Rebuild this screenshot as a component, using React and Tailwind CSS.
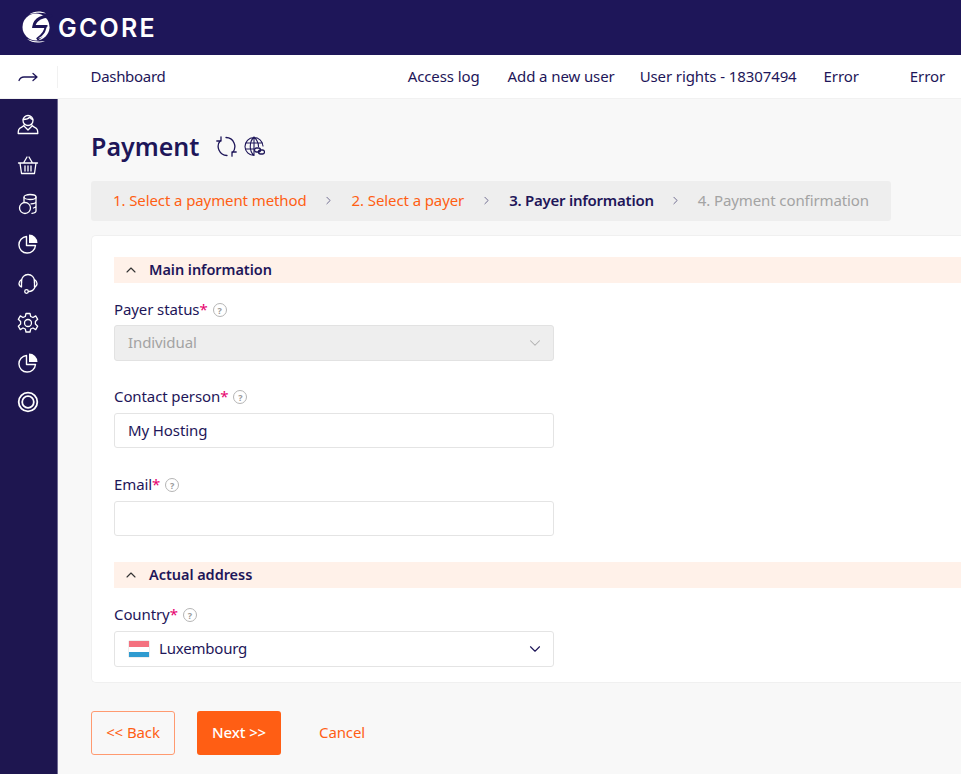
import React from "react";
import { ChevronUp, ChevronDown, ChevronRight } from "lucide-react";

const Logo = () => (
  <svg width="32" height="34" viewBox="0 0 32 34" className="mb-[1px] shrink-0">
    <circle cx="15" cy="17" r="13.500" fill="#fff" />
    <path d="M31 6.500C22 5 14 9 12.800 16.500H25C25 22 21 26 16 29.500" fill="none" stroke="#1e1659" strokeWidth="3" />
    <path d="M25 19C24 24 20 27 17 28.500 22 28 27 24 28.500 17.500L26 16.500z" fill="#fff" />
    <path d="M8 4.500C13 1 20 .5 25 3.500 20 2.500 14 2.500 8 4.500zM6 29c5 4 12 4.500 18 2-6 1-12 .5-18-2z" fill="#fff" />
  </svg>
);

const Ic = ({ children }) => (
  <svg width="22" height="22" viewBox="0 0 22 22" fill="none" stroke="#fff" strokeWidth="1.300" strokeLinecap="round" strokeLinejoin="round">{children}</svg>
);

const Pie = () => (
  <Ic>
    <path d="M9.500 3.500a8.300 8.300 0 1 0 9 9h-9z" strokeWidth="1.400" />
    <path d="M12 1.500a8.500 8.500 0 0 1 8.500 8.500H12z" fill="#fff" stroke="none" />
  </Ic>
);

const icons = [
  <Ic key="u"><circle cx="11" cy="6.500" r="5" /><path d="M6.300 5.500c2.500 0 5-.5 6.700-2.500 .5 1.500 1.500 2.200 2.700 2.500M7.500 10.500c-.5 2.500-4.500 2.500-5.700 5-.4 1-.6 2.500-.6 4h19.600c0-1.500-.2-3-.6-4-1.200-2.500-5.200-2.500-5.700-5M7.500 12.500 11 16l3.500-3.500" /></Ic>,
  <Ic key="b"><path d="M1.500 9h19M3 9l1.500 10.500h13L19 9M6.500 9 10 3M15.500 9 12 3M8 12v5M11 12v5M14 12v5" /></Ic>,
  <Ic key="d"><ellipse cx="13" cy="4" rx="6" ry="2.500" /><path d="M7 4.500v4.500M19 4V18c0 1-1.500 2-4 2.300M19 8.500c0 1-2 2.200-5 2.400M19 13c0 .8-1 1.500-2.500 2" /><circle cx="8" cy="15" r="5.500" /></Ic>,
  <Pie key="p1" />,
  <Ic key="h"><path d="M4.500 11V9a6.500 6.500 0 0 1 13 0v2" /><path d="M4.500 7.500C3 8.500 2 10 2 11.500s1 3 2.500 3.500zM17.500 7.500c1.500 1 2.500 2.500 2.500 4s-1 3-2.500 3.500z" /><path d="M18 15c-1 3-3.500 4.500-6.500 4.500" /><circle cx="9.500" cy="19.500" r="1.800" /></Ic>,
  <Ic key="g"><circle cx="11" cy="11" r="3.500" /><path d="M9 1.500h4l.7 3 2.300 1 2.700-1.600 2 3.400-2.300 2.200v2.500l2.300 2.200-2 3.400-2.700-1.600-2.300 1-.7 3H9l-.7-3-2.300-1-2.700 1.600-2-3.400 2.300-2.200V9.500L1.300 7.300l2-3.400L6 5.500l2.300-1z" /></Ic>,
  <Pie key="p2" />,
  <Ic key="l"><circle cx="11" cy="11" r="9.300" strokeWidth="1.800" /><circle cx="11" cy="11" r="5.800" strokeWidth="1.800" /></Ic>,
];

const Q = () => (
  <span className="ml-[5px] mt-[2px] inline-flex h-[14px] w-[14px] items-center justify-center rounded-full border border-[#b5b5b5] text-[9px] font-bold leading-none text-[#9a9a9a]">?</span>
);

const Label = ({ children }) => (
  <div className="flex h-[20px] items-center pb-[2px] text-[15px] text-[#1e1659]">
    <span>{children}<span className="text-[#e6006e]">*</span></span>
    <Q />
  </div>
);

const Section = ({ children }) => (
  <div className="flex h-[26px] items-center bg-[#fff1e9] pl-[9px] text-[14.500px] font-semibold text-[#1e1659]">
    <ChevronUp size={16} strokeWidth={1.700} className="mr-[10px] text-[#333]" />
    <span className="tracking-[-0.05px]">{children}</span>
  </div>
);

const Input = ({ children }) => (
  <div className="flex h-[35px] w-[440px] items-center rounded-[3px] border border-[#e4e4e4] bg-white px-[13px] text-[15px] text-[#1e1659]">{children}</div>
);

const Sep = () => (
  <span className="flex w-[6px] justify-center">
    <ChevronRight size={13} strokeWidth={1.500} className="shrink-0 text-[#55507c]" />
  </span>
);

export default function App() {
  return (
    <div className="flex h-[774px] w-[961px] flex-col overflow-hidden bg-[#f8f8f8] font-['Noto_Sans',sans-serif] tracking-[-0.1px]">
      <header className="flex h-[55px] shrink-0 items-center bg-[#1e1659] pl-[21px]">
        <Logo />
        <span className="ml-[5px] pt-[2px] font-['Inter',sans-serif] text-[25px] font-semibold tracking-[2.200px] text-white">GCORE</span>
      </header>
      <nav className="flex h-[44px] shrink-0 items-center border-b border-[#f1f1f1] bg-white text-[15px] text-[#1e1659]">
        <div className="flex h-[22px] w-[58px] items-center justify-center border-r border-[#f1f1f1] pr-[2px]">
          <svg width="20" height="10" viewBox="0 0 20 10" fill="none" stroke="#1e1659" strokeWidth="1.300" strokeLinecap="round" strokeLinejoin="round">
            <path d="M1 8.500C2 6 3.500 5 6 5h13M15 1.500 19 5l-4 3.500" />
          </svg>
        </div>
        <span className="ml-[32.500px] tracking-[-0.3px]">Dashboard</span>
        <div className="ml-auto flex pr-[16px]">
          <span className="mr-[2px]">Access log</span>
          <span className="ml-[26px]">Add a new user</span>
          <span className="ml-[25px]">User rights - 18307494</span>
          <span className="ml-[27px]">Error</span>
          <span className="ml-[51px]">Error</span>
        </div>
      </nav>
      <div className="flex min-h-0 flex-1">
        <aside className="flex w-[58px] shrink-0 flex-col items-center gap-[17.600px] border-r border-[#6f6a92] bg-[#1e1650] pr-[2px] pt-[15px]">
          {icons}
        </aside>
        <main className="min-w-0 flex-1 pl-[33px]">
          <div className="flex h-[82px] items-center pt-[13px]">
            <h1 className="text-[25px] font-semibold tracking-[0px] text-[#1e1659]">Payment</h1>
            <svg className="ml-[17px]" width="21" height="21" viewBox="0 0 21 21" fill="none" stroke="#1e1659" strokeWidth="1.300" strokeLinecap="round" strokeLinejoin="round">
              <path d="M11 19.500A9 9 0 0 1 4.500 4.500M5 .8V5H.8M10 1.500A9 9 0 0 1 16.500 16.500M16 20.200V16H20.200" />
            </svg>
            <svg className="ml-[7px]" width="21" height="21" viewBox="0 0 21 21" fill="none" stroke="#1e1659" strokeWidth="1.100" strokeLinecap="round">
              <path d="M10 19.500a9 9 0 1 1 9-9.500M1.500 7h17M1.500 13h8M10 1C5 6 5 15 10 19.500M10 1c3 3 4.500 6 4.500 9.500M10 1v18.500" />
              <rect x="10.500" y="12" width="6" height="4" rx="2" strokeWidth="1.300" />
              <rect x="14.500" y="14" width="6" height="4" rx="2" strokeWidth="1.300" />
            </svg>
          </div>
          <div className="flex h-[40px] w-[800px] items-center gap-[19px] rounded-[3px] bg-[#eeeeee] pb-[2px] pl-[22px] text-[15px] text-[#ff5f14]">
            <span>1. Select a payment method</span>
            <Sep />
            <span className="ml-[1px]">2. Select a payer</span>
            <Sep />
            <span className="ml-[1px] font-semibold tracking-[-0.25px] text-[#1e1659]">3. Payer information</span>
            <Sep />
            <span className="text-[#a3a3a3]">4. Payment confirmation</span>
          </div>
          <section className="mt-[14px] h-[448px] rounded-l-[5px] border border-r-0 border-[#f0f0f0] bg-white pl-[22px] pt-[21px]">
            <Section>Main information</Section>
            <div className="mt-[17px]"><Label>Payer status</Label></div>
            <div className="mt-[5px] flex h-[36px] w-[440px] items-center justify-between rounded-[3px] border border-[#e2e2e2] bg-[#eeeeee] pb-[2px] pl-[13px] pr-[9px] text-[15px] text-[#a3a3a3]">
              Individual
              <ChevronDown size={18} strokeWidth={1.400} className="mt-[2px] text-[#b0b0b0]" />
            </div>
            <div className="mt-[26px]"><Label>Contact person</Label></div>
            <div className="mt-[6px]"><Input>My Hosting</Input></div>
            <div className="mt-[27px]"><Label>Email</Label></div>
            <div className="mt-[6px]"><Input /></div>
            <div className="mt-[26px]"><Section>Actual address</Section></div>
            <div className="mt-[17px]"><Label>Country</Label></div>
            <div className="mt-[6px] flex h-[36px] w-[440px] items-center rounded-[3px] border border-[#e4e4e4] bg-white pb-[2px] pl-[14px] pr-[9px] text-[15px] text-[#1e1659]">
              <div className="mt-[2px] flex h-[16px] w-[20px] flex-col shadow-[0_0_1px_#999]">
                <div className="flex-1 bg-[#f4717f]" />
                <div className="h-[5px] bg-white" />
                <div className="flex-1 bg-[#2f9bd0]" />
              </div>
              <span className="ml-[10px] tracking-[-0.2px]">Luxembourg</span>
              <ChevronDown size={18} strokeWidth={1.500} className="ml-auto mt-[2px] text-[#1e1659]" />
            </div>
          </section>
          <div className="mt-[28px] flex items-center text-[15px]">
            <button className="h-[44px] w-[84px] rounded-[3px] border border-[#ff9a70] pb-[2px] text-[#ff5f14]">&lt;&lt; Back</button>
            <button className="ml-[22px] h-[44px] w-[84px] rounded-[3px] bg-[#ff5e14] pb-[2px] font-medium text-white">Next &gt;&gt;</button>
            <button className="ml-[38px] pb-[2px] text-[#ff5f14]">Cancel</button>
          </div>
        </main>
      </div>
    </div>
  );
}
